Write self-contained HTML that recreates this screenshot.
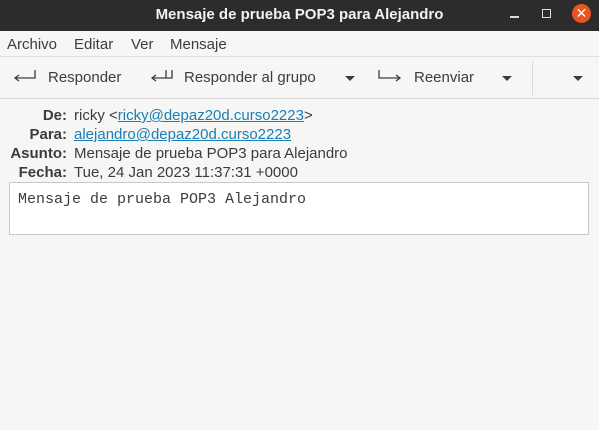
<!DOCTYPE html>
<html><head><style>
*{margin:0;padding:0;box-sizing:border-box}
body{width:599px;height:430px;background:#f6f6f5;font-family:"Liberation Sans","DejaVu Sans",sans-serif;font-size:15px;color:#3c3c3c;position:relative;overflow:hidden}
.t{position:absolute;white-space:nowrap}
#title{position:absolute;left:0;top:0;width:599px;height:31px;background:#2c2c2c}
a{color:#1a7fb5;text-decoration:underline}
.lbl{position:absolute;right:532px;font-weight:bold;white-space:nowrap}
.arr{position:absolute;width:0;height:0;border-left:5px solid transparent;border-right:5px solid transparent;border-top:5px solid #3c3c3c}
</style></head><body>
<div id="title">
<div class="t" style="left:0;width:599px;text-align:center;top:6px;color:#f2f2f2;font-weight:bold;font-size:15px">Mensaje de prueba POP3 para Alejandro</div>
<div style="position:absolute;left:510px;top:16px;width:9px;height:1.5px;background:#ddd"></div>
<div style="position:absolute;left:542px;top:9px;width:9px;height:9px;border:1.5px solid #ddd"></div>
<div style="position:absolute;left:572px;top:4px;width:19px;height:19px;border-radius:50%;background:#e95420;color:#fff;text-align:center;line-height:18px;font-size:14px">✕</div>
</div>
<div style="position:absolute;top:31px;left:0;width:599px;height:26px;background:#f6f6f6;border-bottom:1px solid #e0e0e0"></div>
<div class="t" style="left:7px;top:36px">Archivo</div>
<div class="t" style="left:74px;top:36px">Editar</div>
<div class="t" style="left:131px;top:36px">Ver</div>
<div class="t" style="left:170px;top:36px">Mensaje</div>
<div style="position:absolute;top:98px;left:0;width:599px;height:1px;background:#d8d8d8"></div>
<svg style="position:absolute;left:0;top:57px" width="599" height="41">
<g fill="none" stroke="#3c3c3c" stroke-width="1.3">
<path d="M35 13v8H15"/><path d="M19 18l-4 3 4 3"/>
<path d="M172 13v8H152"/><path d="M166 13v8"/><path d="M156 18l-4 3 4 3"/>
<path d="M379 13v8h20"/><path d="M396 18l4 3-4 3"/>
</g>
<line x1="532.5" y1="4" x2="532.5" y2="38" stroke="#d8d8d8"/>
</svg>
<div class="t" style="left:48px;top:69px">Responder</div>
<div class="t" style="left:184px;top:69px">Responder al grupo</div>
<div class="t" style="left:414px;top:69px">Reenviar</div>
<div class="arr" style="left:345px;top:76px"></div>
<div class="arr" style="left:502px;top:76px"></div>
<div class="arr" style="left:573px;top:76px"></div>
<div class="lbl" style="top:107px">De:</div>
<div class="lbl" style="top:126px">Para:</div>
<div class="lbl" style="top:145px">Asunto:</div>
<div class="lbl" style="top:164px">Fecha:</div>
<div class="t" style="left:74px;top:107px">ricky &lt;<a>ricky@depaz20d.curso2223</a>&gt;</div>
<div class="t" style="left:74px;top:126px"><a>alejandro@depaz20d.curso2223</a></div>
<div class="t" style="left:74px;top:145px">Mensaje de prueba POP3 para Alejandro</div>
<div class="t" style="left:74px;top:164px">Tue, 24 Jan 2023 11:37:31 +0000</div>
<div style="position:absolute;left:9px;top:182px;width:580px;height:53px;background:#fff;border:1px solid #c8c8c8"></div>
<div class="t" style="left:18px;top:191px;font-family:'Liberation Mono','DejaVu Sans Mono',monospace;font-size:15px">Mensaje de prueba POP3 Alejandro</div>
</body></html>
